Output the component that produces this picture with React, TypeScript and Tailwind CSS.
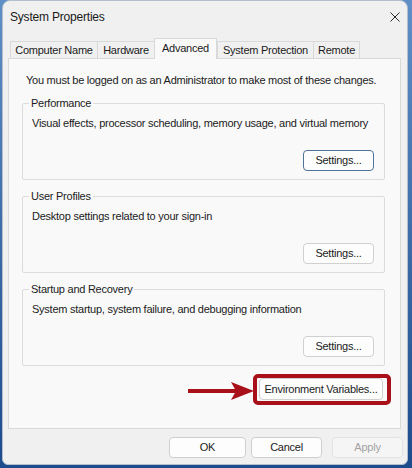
import { ReactNode } from 'react'

const tabs = [
  { label: 'Computer Name', w: 'w-[87px]' },
  { label: 'Hardware', w: 'w-[57px]' },
  { label: 'Advanced', w: 'w-[63px]', active: true },
  { label: 'System Protection', w: 'w-[96px]' },
  { label: 'Remote', w: 'w-[47px]' },
]

function Btn({ children, className = '' }: { children: ReactNode; className?: string }) {
  return (
    <button className={`h-[21px] rounded-[4px] border bg-[#fdfdfd] text-[#1b1b1b] flex items-center justify-center leading-none ${className}`}>
      {children}
    </button>
  )
}

function Group({ title, desc, focused }: { title: string; desc: string; focused?: boolean }) {
  return (
    <fieldset className="border border-[#dcdcdc] rounded-[2px] pl-[9px] pr-[10px] pb-[8px]">
      <legend className="-ml-[3px] px-[2px] leading-[14px]">{title}</legend>
      <p className="mt-[6px] leading-[14px]">{desc}</p>
      <div className="mt-[20px] flex justify-end">
        <Btn className={`w-[71px] ${focused ? 'border-[#4f7399]' : 'border-[#d0d0d0]'}`}>Settings...</Btn>
      </div>
    </fieldset>
  )
}

export default function App() {
  return (
    <div className="w-[412px] h-[468px] bg-gradient-to-b from-[#5f8fc6] to-[#1c4c8c] pl-[2px] pr-[4px] pb-[3px] font-['Liberation_Sans',Arial,sans-serif] text-[11px] tracking-[-0.25px] text-[#1b1b1b]">
      <div className="h-[465px] w-[406px] bg-[#f0f0f0] rounded-t-[8px] rounded-b-[6px] border border-[#b3bfcc] flex flex-col overflow-hidden">
        {/* title bar */}
        <div className="h-[31px] shrink-0 flex items-center justify-between pl-[7px] pr-[6px]">
          <span className="text-[12px] tracking-[-0.2px] text-[#1a1a1a]">System Properties</span>
          <svg width="10" height="10" viewBox="0 0 10 10" className="mr-[1px]">
            <path d="M0.5 0.5 L9.5 9.5 M9.5 0.5 L0.5 9.5" stroke="#2a2a2a" strokeWidth="1" fill="none" />
          </svg>
        </div>

        {/* tabs */}
        <div className="mt-[6px] ml-[7px] h-[21px] -mb-[1px] flex items-end relative z-10">
          {tabs.map((t) => (
            <div
              key={t.label}
              className={
                t.active
                  ? `${t.w} h-[21px] bg-[#f9f9f9] border-x border-t border-[#d9d9d9] flex items-center justify-center pb-[1px]`
                  : `${t.w} h-[17px] mb-[1px] bg-[#f0f0f0] border-t border-l last:border-r border-[#d9d9d9] flex items-center justify-center`
              }
            >
              {t.label}
            </div>
          ))}
        </div>

        {/* panel */}
        <div className="ml-[5px] mr-[6px] h-[371px] border border-[#d9d9d9] bg-[#f9f9f9] pl-[13px] pr-[15px] pt-[14px] flex flex-col">
          <p className="pl-[4px] leading-[14px]">You must be logged on as an Administrator to make most of these changes.</p>
          <div className="mt-[9px] flex flex-col gap-[9px]">
            <Group title="Performance" desc="Visual effects, processor scheduling, memory usage, and virtual memory" focused />
            <Group title="User Profiles" desc="Desktop settings related to your sign-in" />
            <Group title="Startup and Recovery" desc="System startup, system failure, and debugging information" />
          </div>
          <div className="mt-[8px] -mr-[6px] flex items-center justify-end">
            <svg width="66" height="18" viewBox="0 0 66 18" className="mt-[3px] -mr-[1px]">
              <rect x="0" y="7" width="48" height="4" fill="#a8101a" />
              <polygon points="43,0 66,9 43,18 48,9" fill="#a8101a" />
            </svg>
            <div className="border-[4px] border-[#a8101a] rounded-[5px] pl-[2px] pr-[4px] pt-0 pb-[1px]">
              <Btn className="w-[124px] h-[22px] border-[#d0d0d0]">Environment Variables...</Btn>
            </div>
          </div>
        </div>

        {/* dialog buttons */}
        <div className="mt-[8px] pr-[4px] flex justify-end">
          <Btn className="w-[77px] mr-[5px] border-[#cfcfcf]">OK</Btn>
          <Btn className="w-[71px] mr-[10px] border-[#cfcfcf]">Cancel</Btn>
          <Btn className="w-[71px] border-[#e3e3e3] !bg-[#f5f5f5] !text-[#a3a3a3]">Apply</Btn>
        </div>
      </div>
    </div>
  )
}
